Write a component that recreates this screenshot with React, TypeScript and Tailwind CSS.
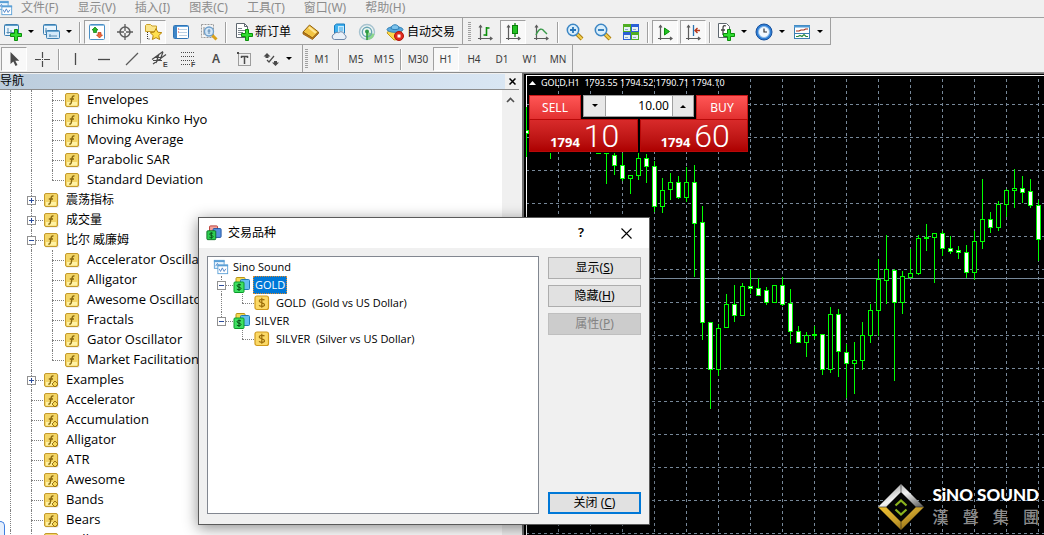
import { useState } from 'react'
import type { ReactNode } from 'react'
import clsx from 'clsx'

// x, high, low, body top, body bottom, filled
type Candle = [number, number, number, number, number, boolean]

const candles: Candle[] = [
  [26, 34, 84, 57, 61, true],
  [50, 80, 86, 80, 80, false],
  [98, 80, 81, 80, 81, false],
  [106, 80, 111, 80, 81, false],
  [114, 80, 102, 82, 93, true],
  [122, 80, 108, 92, 106, true],
  [130, 102, 121, 102, 106, false],
  [138, 80, 107, 85, 103, false],
  [146, 81, 110, 85, 94, true],
  [154, 88, 139, 93, 134, true],
  [162, 105, 140, 117, 134, false],
  [170, 100, 127, 109, 117, false],
  [178, 103, 126, 109, 125, true],
  [186, 94, 129, 109, 125, false],
  [194, 92, 204, 109, 151, true],
  [202, 133, 267, 149, 250, true],
  [210, 249, 336, 249, 297, true],
  [218, 251, 303, 255, 297, false],
  [226, 221, 255, 231, 255, false],
  [234, 212, 249, 231, 243, true],
  [242, 210, 243, 213, 243, false],
  [250, 197, 221, 213, 216, true],
  [258, 205, 223, 215, 223, true],
  [266, 214, 232, 217, 230, true],
  [274, 212, 230, 212, 230, false],
  [282, 204, 233, 212, 232, true],
  [290, 216, 271, 230, 259, true],
  [298, 253, 270, 258, 270, true],
  [306, 259, 284, 262, 270, false],
  [314, 253, 266, 261, 263, false],
  [322, 261, 302, 261, 297, true],
  [330, 234, 300, 241, 297, false],
  [338, 236, 304, 241, 279, true],
  [346, 271, 325, 279, 291, true],
  [354, 269, 321, 287, 291, false],
  [362, 249, 297, 262, 288, false],
  [370, 231, 270, 237, 263, false],
  [378, 186, 263, 206, 238, false],
  [386, 162, 231, 196, 208, false],
  [394, 196, 308, 197, 230, true],
  [402, 198, 241, 203, 230, false],
  [410, 176, 205, 200, 205, false],
  [418, 162, 202, 165, 201, false],
  [426, 151, 178, 164, 166, false],
  [434, 160, 210, 160, 165, false],
  [442, 158, 183, 160, 176, true],
  [450, 163, 181, 175, 179, true],
  [458, 173, 186, 177, 180, true],
  [466, 172, 205, 179, 200, true],
  [474, 158, 207, 168, 200, false],
  [482, 106, 176, 146, 169, false],
  [490, 139, 160, 146, 155, true],
  [498, 128, 158, 131, 155, false],
  [506, 116, 144, 117, 132, false],
  [514, 96, 135, 115, 118, false],
  [522, 103, 130, 115, 120, true],
  [530, 106, 135, 118, 133, true],
  [538, 127, 188, 132, 167, true],
]

const verticals = Array.from({ length: 60 }, (_, i) => 58 + i * 32)
const horizontals = Array.from({ length: 40 }, (_, i) => 31 + i * 33)

function PriceChart() {
  return (
    <svg className="block h-full w-full">
      <g transform="translate(-26 -2)">
        <g stroke="#778899" strokeDasharray="3 3" strokeWidth="1">
          {verticals.map((x) => (
            <line key={x} x1={x + 0.5} x2={x + 0.5} y1="0" y2="1400" />
          ))}
          {horizontals.map((y) => (
            <line key={y} x1="26" x2="2000" y1={y + 0.5} y2={y + 0.5} />
          ))}
        </g>
        <rect x="26" y="205" width="2000" height="1" fill="#778899" />
        <rect x="26" y="2" width="2000" height="1" fill="#fff" />
        <rect x="26" y="2" width="1" height="1400" fill="#fff" />
        {candles.map(([x, high, low, top, bottom, filled]) => (
          <g key={x}>
            <rect x={x} y={high} width="1" height={low - high} fill="#00ff00" />
            {bottom - top > 2 ? (
              <rect
                x={x - 1.5}
                y={top + 0.5}
                width="4"
                height={bottom - top - 1}
                fill={filled ? '#fff' : '#000'}
                stroke="#00ff00"
              />
            ) : (
              bottom > top && <rect x={x - 2} y={top} width="5" height={bottom - top} fill="#00ff00" />
            )}
          </g>
        ))}
      </g>
    </svg>
  )
}

/* ---------- icons ---------- */

function Icon({ children, size = 18 }: { children: ReactNode; size?: number }) {
  return (
    <svg width={size} height={size} viewBox="0 0 18 18" fill="none" className="shrink-0">
      {children}
    </svg>
  )
}

const Plus = () => (
  <path
    d="M10.5 6.5h3v4h4v3h-4v4h-3v-4h-4v-3h4z"
    fill="#2fdc2f"
    stroke="#0a8f0a"
    strokeWidth="1"
  />
)

const NewChartIcon = () => (
  <Icon>
    <rect x="0.5" y="1.5" width="14" height="11" rx="1" fill="#eaf5fd" stroke="#3c7fb1" />
    <path d="M1 2.500h13" stroke="#5b9bc8" strokeWidth="1" />
    <path d="M4 5v6M2.5 9.500h8M7 7v3" stroke="#5b8fb5" />
    <Plus />
  </Icon>
)

const ProfilesIcon = () => (
  <Icon>
    <rect x="1.500" y="1.500" width="13" height="10" rx="1" fill="#eaf5fd" stroke="#3c7fb1" />
    <path d="M2 2.500h12" stroke="#6aa7d2" />
    <path d="M4 5v5M3 8h6" stroke="#5b8fb5" />
    <rect x="4.500" y="7.500" width="13" height="8" rx="1" fill="#d3e9f9" stroke="#3c7fb1" />
    <path d="M5 8.500h12" stroke="#6aa7d2" />
    <path d="M7 13h8M8 11v3" stroke="#5b8fb5" />
  </Icon>
)

const MarketWatchIcon = () => (
  <Icon>
    <rect x="1.500" y="1.500" width="15" height="15" rx="1" fill="#fff" stroke="#4b8fc4" />
    <path d="M2 2.500h14" stroke="#8fc0e6" />
    <path d="M7 4l3 3H8.500v2.500h-3V7H4z" fill="#25b525" stroke="#0a7d0a" strokeWidth=".7" />
    <path d="M11.500 15l3-3H13V9.500h-3V12H8.500z" fill="#f0683c" stroke="#c23a10" strokeWidth=".7" />
  </Icon>
)

const CrosshairIcon = () => (
  <Icon>
    <circle cx="9" cy="9" r="5" stroke="#5c5c5c" strokeWidth="1.500" />
    <path d="M9 1v7M9 10v7M1 9h7M10 9h7" stroke="#5c5c5c" strokeWidth="1.300" />
  </Icon>
)

const NavigatorIcon = () => (
  <Icon>
    <path d="M1.500 8.500v-6l1-1h4l1.500 1.500h4.500v5.500z" fill="#fbe58a" stroke="#c9a02a" />
    <path d="M3.500 9v7h3" stroke="#333" strokeDasharray="1 1" />
    <path
      d="M12 5.500l1.800 3.700 4 .5-3 2.800.8 4L12 14.600l-3.600 1.900.8-4-3-2.800 4-.5z"
      fill="#ffe04d"
      stroke="#b8860b"
    />
  </Icon>
)

const TerminalIcon = () => (
  <Icon>
    <rect x="1.500" y="2.500" width="15" height="13" rx="1" fill="#fff" stroke="#2f74b5" />
    <path d="M2 3.500h14" stroke="#5aa0dc" />
    <rect x="2" y="3" width="3" height="12" fill="#3f86c8" />
    <path d="M7 6.500h8M7 9.500h8M7 12.500h8" stroke="#b9cfe3" />
    <path d="M6.500 5.500v1M6.500 8.500v1" stroke="#e23b2e" />
  </Icon>
)

const TesterIcon = () => (
  <Icon>
    <rect x="1.500" y="1.500" width="12" height="13" fill="#f4f4f4" stroke="#9a9a9a" strokeDasharray="2 1" />
    <path d="M4 4v8M4 10h7M10 4v3" stroke="#8a8a8a" />
    <path d="M12 12l4.500 4.500" stroke="#d9a21b" strokeWidth="3" />
    <circle cx="9" cy="8.500" r="4.500" fill="#cfe6f8" fillOpacity=".9" stroke="#6f9fca" strokeWidth="1.300" />
    <path d="M9 6v5M7.500 8h3" stroke="#5d8ab4" />
  </Icon>
)

const NewOrderIcon = () => (
  <Icon>
    <path d="M1.500.5h8l3 3v11h-11z" fill="#fff" stroke="#5f6870" />
    <path d="M9.500.5v3h3" stroke="#5f6870" />
    <path d="M3 5.500h4M3 7.500h7M3 9.500h5M3 11.500h4" stroke="#7b858d" />
    <Plus />
  </Icon>
)

const BookIcon = () => (
  <Icon>
    <path d="M7.500 2L16.500 9l-6 6L1 9z" fill="#f2c443" stroke="#8f5f10" />
    <path d="M7.500 3.500L14.500 9l-1.500 1.500L6 5z" fill="#ffe694" />
    <path d="M1 9v2l9.500 5.500 6-6V9l-6 6z" fill="#c47a16" stroke="#8f5f10" strokeWidth=".8" />
  </Icon>
)

const HostingIcon = () => (
  <Icon>
    <path d="M4.500 2.500l2-1.500h8v9h-10z" fill="#3fb1ef" stroke="#187cc0" />
    <rect x="8" y="3" width="6" height="8" fill="#c6eafd" />
    <path d="M9 5h4M9 7h4" stroke="#3ba7e4" />
    <path
      d="M4.500 16.500a2.700 2.700 0 01-.3-5.300 3 3 0 014.300-1.500 3.600 3.600 0 016 2 2.500 2.500 0 01-.5 4.800z"
      fill="#e9f0f8"
      stroke="#6f87a8"
    />
  </Icon>
)

const SignalsIcon = () => (
  <Icon>
    <circle cx="9" cy="9" r="7.500" stroke="#a7c3cf" strokeWidth="1.400" fill="#eef5f4" />
    <path d="M9 9v8a8 8 0 007.500-6z" fill="#8bd68b" />
    <circle cx="9" cy="9" r="4.700" stroke="#6aa6b4" strokeWidth="1.400" />
    <circle cx="9" cy="8.500" r="2" fill="#2f9c4a" />
    <path d="M9 9v8" stroke="#2d9c3c" strokeWidth="1.600" />
  </Icon>
)

const AutoTradingIcon = () => (
  <Icon>
    <path d="M3 7h13l-4 9.500-4 .5-7-7z" fill="#fbd84d" stroke="#c49a1c" />
    <ellipse cx="9" cy="6.500" rx="8" ry="2.800" fill="#5aa9dc" stroke="#2f7fb6" />
    <path d="M5 5.500C5 .5 13 .5 13 5.500c-2 1.500-6 1.500-8 0z" fill="#7cc3ec" stroke="#2f7fb6" />
    <circle cx="13" cy="13" r="4.500" fill="#e02a1d" stroke="#b01208" />
    <rect x="11.500" y="11.500" width="3" height="3" fill="#fff" />
  </Icon>
)

const Axes = () => (
  <path d="M4.500 3v14M2 15.500h13.500M3 4.500L4.500 2.500 6 4.500M14 14l2 1.500-2 1.500" stroke="#5c5c5c" strokeWidth="1.200" />
)

const BarChartIcon = () => (
  <Icon>
    <Axes />
    <path d="M10.500 4v9M10.500 5h3M7.500 12h3" stroke="#0a8f0a" strokeWidth="1.600" />
  </Icon>
)

const CandleChartIcon = () => (
  <Icon>
    <Axes />
    <path d="M11 0v14" stroke="#0a7d0a" strokeWidth="1.300" />
    <rect x="8.500" y="2.500" width="5" height="8" fill="#22c322" stroke="#0a7d0a" />
  </Icon>
)

const LineChartIcon = () => (
  <Icon>
    <Axes />
    <path d="M4 12c3-7 6-7 8-4l3 3" stroke="#3a9a4a" strokeWidth="1.400" />
  </Icon>
)

function ZoomIcon({ minus = false }: { minus?: boolean }) {
  return (
    <Icon>
      <path d="M11 11l5 5" stroke="#a97c0f" strokeWidth="4" />
      <path d="M11 11l5 5" stroke="#f2ce4e" strokeWidth="2.200" />
      <circle cx="7" cy="7" r="5.700" fill="#d9eefb" stroke="#3c86c4" strokeWidth="1.500" />
      <path d={minus ? 'M4 7h6' : 'M4 7h6M7 4v6'} stroke="#2775b8" strokeWidth="1.800" />
    </Icon>
  )
}

const TileIcon = () => (
  <Icon>
    <rect x="1" y="1" width="8" height="8" fill="#4fae22" />
    <rect x="9" y="1" width="8" height="8" fill="#2a5fd6" />
    <rect x="1" y="9" width="8" height="8" fill="#2a5fd6" />
    <rect x="9" y="9" width="8" height="8" fill="#4fae22" />
    <path d="M2 4h6v4H2zM2 12h6v4H2zM10 4h6v4h-6zM10 12h6v4h-6z" fill="#e6f2f4" />
    <path d="M3 6.500h3M11 6.500h3M3 14.500h3M11 14.500h3" stroke="#8fa9c9" />
  </Icon>
)

const AutoScrollIcon = () => (
  <Icon>
    <Axes />
    <path d="M8.500 5l5 3.500-5 3.500z" fill="#22c322" stroke="#0a8f0a" />
  </Icon>
)

const ChartShiftIcon = () => (
  <Icon>
    <Axes />
    <path d="M9.500 2v11" stroke="#2b72b0" strokeWidth="1.300" />
    <path d="M16 7.500h-5M13.500 5L11 7.500l2.500 2.500" stroke="#b8391b" strokeWidth="1.400" />
  </Icon>
)

const IndicatorsIcon = () => (
  <Icon>
    <path d="M1.500.5h8l3 3v11h-11z" fill="#fff" stroke="#5f6870" />
    <path d="M9 3c-2-1-3 0-3 2v7M4 7h4" stroke="#444" strokeWidth="1.300" />
    <Plus />
  </Icon>
)

const ClockIcon = () => (
  <Icon>
    <circle cx="9" cy="9" r="8" fill="#2f7fd6" stroke="#17509c" />
    <circle cx="9" cy="9" r="5.500" fill="#f3f9ff" stroke="#8fbdea" />
    <path d="M9 5.500V9h3" stroke="#333" strokeWidth="1.200" />
  </Icon>
)

const TemplateIcon = () => (
  <Icon>
    <rect x="1.500" y="2.500" width="15" height="13" fill="#fff" stroke="#3c7fb1" />
    <path d="M1 3.500h16" stroke="#4f9bd6" strokeWidth="2" />
    <path d="M1 10.500h16" stroke="#3c7fb1" />
    <path d="M3 8h3l2-1h3l1.500-1H15" stroke="#a12f1a" strokeWidth="1.200" />
    <path d="M3 13.500h2l2-1 2 1 2-2 2 2h2" stroke="#2a8a3a" strokeWidth="1.200" />
  </Icon>
)

const CursorIcon = () => (
  <Icon>
    <path d="M5.500 2v12l2.800-2.600L10.500 16l2-1-2.200-4.300h4z" fill="#4a4a4a" />
  </Icon>
)

const CrossIcon = () => (
  <Icon>
    <path d="M9.500 2v6M9.500 11v6M2 9.500h6M11 9.500h6M9 9.500h1" stroke="#4a4a4a" strokeWidth="1.200" />
  </Icon>
)

const VLineIcon = () => (
  <Icon>
    <path d="M8.500 3v12" stroke="#4a4a4a" strokeWidth="1.300" />
  </Icon>
)

const HLineIcon = () => (
  <Icon>
    <path d="M3 9.500h12" stroke="#4a4a4a" strokeWidth="1.300" />
  </Icon>
)

const TrendIcon = () => (
  <Icon>
    <path d="M3 15L15 3" stroke="#5a5a5a" strokeWidth="1.300" />
  </Icon>
)

const ChannelIcon = () => (
  <Icon>
    <path d="M1 9.500L12 1.500M2 14L15 4.500M3 7.500h8M2 10.500h9M5 13l3-9M9 10l3-8" stroke="#4a4a4a" strokeWidth="1.200" />
    <text x="12" y="17" fontSize="7" fontWeight="bold" fontFamily="Liberation Sans" fill="#444">E</text>
  </Icon>
)

const FiboIcon = () => (
  <Icon>
    <path d="M2 2.500h14M2 6.500h14M2 10.500h14M2 14.500h9" stroke="#4a4a4a" strokeDasharray="1 1" />
    <text x="12" y="17" fontSize="7" fontWeight="bold" fontFamily="Liberation Sans" fill="#444">F</text>
  </Icon>
)

const TextLabelIcon = () => (
  <Icon>
    <rect x="3.500" y="3.500" width="12" height="12" stroke="#4a4a4a" strokeDasharray="1 1" />
    <rect x="2" y="2" width="2" height="2" fill="#4a4a4a" />
    <path d="M6 6.500h7M9.500 6v8M6.500 6v2M12.500 6v2" stroke="#4a4a4a" strokeWidth="1.500" />
  </Icon>
)

const ArrowsIcon = () => (
  <Icon>
    <path d="M5 3l3.500 3.500H6.500V8h-3V6.500h-2zM13.500 16L17 12.500h-2V11h-3v1.500h-2z" fill="#4a4a4a" />
    <path d="M5 10l2 2 5-6" stroke="#4a4a4a" strokeWidth="1.200" />
  </Icon>
)

const ChartWindowsIcon = () => (
  <Icon size={16}>
    <rect x="1.500" y="1.500" width="11" height="9" fill="#e8f4fd" stroke="#5a9fd6" />
    <path d="M1 2.500h12" stroke="#5a9fd6" strokeWidth="2" />
    <path d="M3 8l2-3 2 3" stroke="#4c7fc4" />
    <rect x="5.500" y="6.500" width="11" height="10" fill="#fff" stroke="#5a9fd6" />
    <path d="M5 7.500h12" stroke="#5a9fd6" strokeWidth="1.500" />
    <path d="M7 11l1.500 3 2-4 2 4 2-3" stroke="#4c7fc4" />
  </Icon>
)

function FunctionIcon({ custom = false }: { custom?: boolean }) {
  return (
    <svg width="16" height="16" viewBox="0 0 16 16" fill="none" className="shrink-0">
      <rect x="2" y="2" width="13.500" height="13.500" rx="1.500" fill="#000" fillOpacity=".12" />
      <rect x="1.500" y="1.500" width="13" height="13" rx="1.500" fill="#f3d566" stroke="#c49a2c" />
      <path d="M3 10h10v3.500H3z" fill="#fff2a4" />
      <path d="M10.500 4.200C9 3.500 8.400 4.600 8.100 6L7.300 10.500C7 12 6.300 12.200 5.300 11.800M5.800 7h4.200" stroke="#8a6a10" strokeWidth="1.400" />
      {custom && <path d="M12 9l3 3-3 3-3-3z" fill="#f5d95c" stroke="#9b7414" />}
    </svg>
  )
}

const SymbolGroupIcon = () => (
  <svg width="18" height="16" viewBox="0 0 18 16" fill="none" className="shrink-0">
    <rect x="3" y=".5" width="9" height="8" rx="1" fill="#f3da55" stroke="#b99418" />
    <rect x="7.500" y="2.500" width="9" height="10" rx="1" fill="#64bdf0" stroke="#1f7ab8" />
    <rect x="1" y="5" width="10" height="10.500" rx="1" fill="#3fe062" stroke="#0a9a28" />
    <path d="M8 8c-1-.8-4-.7-4 .8 0 1.600 4 1 4 2.700 0 1.500-3 1.500-4.200.7M6 6.500v7.500" stroke="#064d16" />
  </svg>
)

const DialogIcon = () => (
  <svg width="16" height="16" viewBox="0 0 18 18" fill="none" className="shrink-0">
    <rect x="4" y="1" width="9" height="8" rx="1" fill="#f3a39b" stroke="#b3302a" />
    <rect x="8" y="4" width="9" height="10" rx="1" fill="#5790dc" stroke="#1c4f9e" />
    <rect x="1" y="6.500" width="10" height="10" rx="1" fill="#2fd052" stroke="#0a6a20" />
    <path d="M8 9.500c-1-.8-4-.7-4 .8 0 1.600 4 1 4 2.700 0 1.500-3 1.500-4.200.7M6 8v7.500" stroke="#064d16" />
  </svg>
)

const SymbolIcon = () => (
  <svg width="16" height="16" viewBox="0 0 16 16" fill="none" className="shrink-0">
    <rect x="1" y="1" width="13.500" height="13.500" rx="2" fill="#fbd966" stroke="#d09a1c" strokeWidth="1.200" />
    <path d="M10.500 5.200C9.500 4 5.200 4 5.200 6c0 2.200 5.300 1.300 5.300 3.700 0 2.100-4.300 2-5.500.7M7.800 2.800v10" stroke="#9b6d0a" strokeWidth="1.200" />
  </svg>
)

const Caret = () => <svg width="6" height="4" viewBox="0 0 6 4"><path d="M0 0h6L3 3z" fill="#000" /></svg>

/* ---------- toolbars ---------- */

function ToolButton({
  label,
  pressed = false,
  children,
}: {
  label: string
  pressed?: boolean
  children: ReactNode
}) {
  return (
    <button
      type="button"
      aria-label={label}
      aria-pressed={pressed}
      className={clsx(
        'mx-px flex h-6 w-[26px] items-center justify-center',
        pressed && 'border border-t-[#a0a0a0] border-l-[#a0a0a0] border-r-white border-b-white bg-[#f8f8f8]'
      )}
    >
      {children}
    </button>
  )
}

function SplitButton({ label, children }: { label: string; children: ReactNode }) {
  return (
    <div className="flex h-6 items-center pr-[2px]">
      <button type="button" aria-label={label} className="flex w-[26px] justify-center">
        {children}
      </button>
      <button type="button" aria-label={label + ' ▾'} className="flex w-[10px] justify-center">
        <Caret />
      </button>
    </div>
  )
}

const Separator = () => <div className="mx-[2px] h-[21px] w-[2px] border-r border-l border-l-[#a0a0a0] border-r-white" />

const Grip = () => (
  <div className="h-5 w-[3px] bg-[repeating-linear-gradient(to_bottom,#a0a0a0_0_1px,#f0f0f0_1px_2px)]" />
)

const menus = ['文件(F)', '显示(V)', '插入(I)', '图表(C)', '工具(T)', '窗口(W)', '帮助(H)']

function Timeframe({ name, active, onPick }: { name: string; active: boolean; onPick: (n: string) => void }) {
  return (
    <button
      type="button"
      onClick={() => onPick(name)}
      className={clsx(
        'mx-px h-6 w-[26px] text-[10px] text-[#3c3c3c]',
        active && 'border border-t-[#a0a0a0] border-l-[#a0a0a0] border-r-white border-b-white bg-[#f8f8f8]'
      )}
    >
      {name}
    </button>
  )
}

function Toolbars() {
  const [timeframe, setTimeframe] = useState('H1')
  const frame = (name: string) => (
    <Timeframe key={name} name={name} active={timeframe === name} onPick={setTimeframe} />
  )

  return (
    <header className="shrink-0 bg-[#f0f0f0]">
      <nav className="flex h-[17px] items-center gap-[19px] pb-px text-xs text-[#8c8c8c]">
        <span className="-mr-[11px] -ml-[3px]"><ChartWindowsIcon /></span>
        {menus.map((m) => (
          <button key={m} type="button" className="leading-4 whitespace-nowrap">{m}</button>
        ))}
      </nav>

      <div className="flex border-t border-[#a0a0a0]">
        <div className="flex h-[27px] items-center border-r border-b border-[#a0a0a0] pt-[2px] pr-[2px]">
          <SplitButton label="新图表"><NewChartIcon /></SplitButton>
          <SplitButton label="配置文件"><ProfilesIcon /></SplitButton>
          <span className="pl-px"><Separator /></span>
          <ToolButton label="市场报价" pressed><MarketWatchIcon /></ToolButton>
          <ToolButton label="数据窗口"><CrosshairIcon /></ToolButton>
          <ToolButton label="导航" pressed><NavigatorIcon /></ToolButton>
          <ToolButton label="终端"><TerminalIcon /></ToolButton>
          <ToolButton label="策略测试"><TesterIcon /></ToolButton>
          <Separator />
          <button type="button" className="flex w-[68px] items-center gap-[2px] pl-[6px] text-xs whitespace-nowrap">
            <NewOrderIcon />新订单
          </button>
          <ToolButton label="MetaEditor"><BookIcon /></ToolButton>
          <ToolButton label="虚拟主机"><HostingIcon /></ToolButton>
          <ToolButton label="信号"><SignalsIcon /></ToolButton>
          <button type="button" className="flex w-[79px] items-center gap-[3px] pl-[5px] text-xs whitespace-nowrap">
            <AutoTradingIcon />自动交易
          </button>
        </div>
        <div className="flex h-[27px] items-center border-r border-b border-[#a0a0a0] pt-[2px] pr-[3px] pl-[5px]">
          <Grip />
          <ToolButton label="柱状图"><BarChartIcon /></ToolButton>
          <ToolButton label="阴阳烛" pressed><CandleChartIcon /></ToolButton>
          <ToolButton label="折线图"><LineChartIcon /></ToolButton>
          <Separator />
          <ToolButton label="放大"><ZoomIcon /></ToolButton>
          <ToolButton label="缩小"><ZoomIcon minus /></ToolButton>
          <ToolButton label="平铺窗口"><TileIcon /></ToolButton>
          <Separator />
          <ToolButton label="自动滚动" pressed><AutoScrollIcon /></ToolButton>
          <ToolButton label="图表平移" pressed><ChartShiftIcon /></ToolButton>
          <Separator />
          <SplitButton label="指标"><IndicatorsIcon /></SplitButton>
          <SplitButton label="时间周期"><ClockIcon /></SplitButton>
          <SplitButton label="模板"><TemplateIcon /></SplitButton>
        </div>
      </div>

      <div className="flex">
        <div className="flex h-[27px] items-center border-r border-[#a0a0a0] pt-px pr-[6px]">
          <ToolButton label="光标" pressed><CursorIcon /></ToolButton>
          <ToolButton label="十字准线"><CrossIcon /></ToolButton>
          <Separator />
          <ToolButton label="垂直线"><VLineIcon /></ToolButton>
          <ToolButton label="水平线"><HLineIcon /></ToolButton>
          <ToolButton label="趋势线"><TrendIcon /></ToolButton>
          <ToolButton label="等距通道"><ChannelIcon /></ToolButton>
          <ToolButton label="斐波那契"><FiboIcon /></ToolButton>
          <ToolButton label="文本">
            <span className="text-xs font-semibold text-[#4a4a4a]">A</span>
          </ToolButton>
          <ToolButton label="文本标签"><TextLabelIcon /></ToolButton>
          <SplitButton label="箭头"><ArrowsIcon /></SplitButton>
        </div>
        <div className="flex h-[27px] items-center border-r border-[#a0a0a0] pt-px pl-[2px]">
          <Grip />
          {['M1'].map(frame)}
          <Separator />
          {['M5', 'M15'].map(frame)}
          <Separator />
          {['M30', 'H1', 'H4', 'D1', 'W1', 'MN'].map(frame)}
        </div>
      </div>
    </header>
  )
}

/* ---------- navigator ---------- */

interface Node {
  name: string
  level: 2 | 3
  box?: '+' | '-'
  custom?: boolean
  last?: boolean
}

const nodes: Node[] = [
  { name: 'Envelopes', level: 3 },
  { name: 'Ichimoku Kinko Hyo', level: 3 },
  { name: 'Moving Average', level: 3 },
  { name: 'Parabolic SAR', level: 3 },
  { name: 'Standard Deviation', level: 3, last: true },
  { name: '震荡指标', level: 2, box: '+' },
  { name: '成交量', level: 2, box: '+' },
  { name: '比尔 威廉姆', level: 2, box: '-' },
  { name: 'Accelerator Oscillator', level: 3 },
  { name: 'Alligator', level: 3 },
  { name: 'Awesome Oscillator', level: 3 },
  { name: 'Fractals', level: 3 },
  { name: 'Gator Oscillator', level: 3 },
  { name: 'Market Facilitation Index', level: 3, last: true },
  { name: 'Examples', level: 2, box: '+', custom: true },
  { name: 'Accelerator', level: 2, custom: true },
  { name: 'Accumulation', level: 2, custom: true },
  { name: 'Alligator', level: 2, custom: true },
  { name: 'ATR', level: 2, custom: true },
  { name: 'Awesome', level: 2, custom: true },
  { name: 'Bands', level: 2, custom: true },
  { name: 'Bears', level: 2, custom: true },
  { name: 'Bulls', level: 2, custom: true },
]

function Expander({ sign }: { sign: '+' | '-' }) {
  return (
    <svg width="9" height="9" viewBox="0 0 9 9" className="block shrink-0" shapeRendering="crispEdges">
      <rect x="0" y="0" width="9" height="9" fill="#919191" />
      <rect x="1" y="1" width="7" height="7" fill="#fff" />
      <rect x="2" y="4" width="5" height="1" fill="#2b4b9b" />
      {sign === '+' && <rect x="4" y="2" width="1" height="5" fill="#2b4b9b" />}
    </svg>
  )
}

// One indent column of a tree row: the trunk line plus the stub to the icon.
function Branch({ stub = false, last = false, box }: { stub?: boolean; last?: boolean; box?: '+' | '-' }) {
  return (
    <span className="grid h-full w-[21px] shrink-0 grid-cols-[9px_12px] items-center">
      <span className="col-start-2 row-start-1 h-full">
        <span className={clsx('block border-l border-dotted border-[#808080]', last ? 'h-1/2' : 'h-full')} />
      </span>
      {stub && <span className="col-start-2 row-start-1 border-t border-dotted border-[#808080]" />}
      {box && (
        <span className="col-span-2 col-start-1 row-start-1 pl-[5px]"><Expander sign={box} /></span>
      )}
    </span>
  )
}

function Navigator() {
  return (
    <aside className="flex w-[519px] shrink-0 flex-col bg-[#f0f0f0] pt-px">
      <div className="flex h-4 items-center border-b border-[#8c8c8c] text-xs">
        <h2 className="h-full flex-1 bg-linear-to-r from-[#bccddd] to-[#d9e6f3] text-xs leading-[14px]">导航</h2>
        <button type="button" aria-label="关闭" className="flex w-[14px] justify-center">
          <svg width="7" height="7" viewBox="0 0 7 7"><path d="M.5.5l6 6M6.500.5l-6 6" stroke="#000" strokeWidth="1.500" /></svg>
        </button>
      </div>
      <div className="flex min-h-0 flex-1">
        <ul className="min-w-0 flex-1 overflow-hidden bg-white font-['Open_Sans','Noto_Sans_CJK_SC',sans-serif] text-[13px] text-black">
          {nodes.map((n, i) => (
            <li key={i} className="flex h-5 items-center pl-px whitespace-nowrap">
              <Branch />
              <Branch stub={n.level === 2} box={n.box} />
              {n.level === 3 && <Branch stub last={n.last} />}
              <FunctionIcon custom={n.custom} />
              <span className={clsx('pl-[7px]', n.name > '\u3000' && 'text-xs')}>{n.name}</span>
            </li>
          ))}
        </ul>
        <div className="flex w-[17px] justify-center pt-[7px]">
          <svg width="9" height="6" viewBox="0 0 9 6"><path d="M1 5l3.500-3.500L8 5" fill="none" stroke="#505050" strokeWidth="1.600" /></svg>
        </div>
      </div>
    </aside>
  )
}

/* ---------- one click trading ---------- */

function TradePanel() {
  return (
    <div className="absolute top-[20px] left-[3px] w-[219px] bg-black text-white">
      <div className="flex h-6 justify-between">
        <button type="button" className="w-[52px] border border-b-0 border-[#c81818] bg-linear-to-b from-[#ff5555] to-[#e23030] text-xs leading-5">
          SELL
        </button>
        <div className="mb-[2px] flex w-[111px] border border-[#a0a0a0] bg-[#e8e8e8]">
          <button type="button" aria-label="减少" className="flex w-[21px] items-center justify-center"><Caret /></button>
          <input
            aria-label="手数"
            defaultValue="10.00"
            className="min-w-0 flex-1 border-x border-[#a0a0a0] bg-white px-[3px] text-right text-xs text-black outline-none"
          />
          <button type="button" aria-label="增加" className="flex w-[20px] rotate-180 items-center justify-center"><Caret /></button>
        </div>
        <button type="button" className="w-[52px] border border-b-0 border-[#c81818] bg-linear-to-b from-[#ff5555] to-[#e23030] text-xs leading-5">
          BUY
        </button>
      </div>
      <div className="flex h-[33px] gap-[2px]">
        {['10', '60'].map((pips) => (
          <div
            key={pips}
            className="flex flex-1 items-baseline justify-center gap-1 border border-[#b80808] bg-linear-to-b from-[#d82a2a] to-[#ad0000] pl-[3px] leading-8"
          >
            <span className="font-['Open_Sans',sans-serif] text-[13px] font-bold">1794</span>
            <span className="font-['Roboto',sans-serif] text-[32px] font-light">{pips}</span>
          </div>
        ))}
      </div>
    </div>
  )
}

function SinoLogo() {
  return (
    <div className="absolute right-[5px] bottom-[5px] flex items-center gap-2">
      <svg width="46" height="46" viewBox="0 0 46 46">
        <defs>
          <linearGradient id="silver" x1="0" y1="0" x2="1" y2="1">
            <stop offset="0" stopColor="#777" />
            <stop offset=".5" stopColor="#f4f4f4" />
            <stop offset="1" stopColor="#555" />
          </linearGradient>
          <linearGradient id="gold" x1="0" y1="0" x2="1" y2="1">
            <stop offset="0" stopColor="#f0c030" />
            <stop offset=".5" stopColor="#c9a02c" />
            <stop offset="1" stopColor="#7a5208" />
          </linearGradient>
        </defs>
        <path d="M23 0l23 23H0z" fill="url(#silver)" />
        <path d="M0 23h46L23 46z" fill="url(#gold)" />
        <path d="M23 8l15 15-15 15L8 23z" fill="#050505" />
        <path d="M23 0v8M0 23h8M23 46v-8M46 23h-8" stroke="#222" strokeWidth=".6" />
        <path d="M17.500 21.500l5.500-5 5.500 5M17.500 25.500l5.500 5 5.500-5" fill="none" stroke="#8cb41e" strokeWidth="2.200" />
      </svg>
      <div>
        <div className="font-['Lato','Open_Sans',sans-serif] text-[17px] leading-5 font-black whitespace-nowrap text-white">
          SiNO SOUND
        </div>
        <div className="flex justify-between text-[16px] leading-6 font-medium text-[#8c8c8c]">
          {['漢', '聲', '集', '團'].map((c) => <span key={c}>{c}</span>)}
        </div>
      </div>
    </div>
  )
}

function ChartPane() {
  return (
    <main className="relative min-w-0 flex-1 overflow-hidden border-t border-l-2 border-[#6e6e6e] bg-black pt-px pl-[2px]">
      <div className="relative h-full">
        <PriceChart />
        <p className="absolute top-[1px] left-[3px] flex items-center gap-[5px] text-[9px] leading-[14px] whitespace-pre text-white">
          <svg width="7" height="4" viewBox="0 0 7 4"><path d="M0 4h7L3.500 0z" fill="#fff" /></svg>
          {'GOLD,H1  1793.55 1794.52 1790.71 1794.10'}
        </p>
        <TradePanel />
      </div>
      <SinoLogo />
    </main>
  )
}

/* ---------- symbols dialog ---------- */

function SymbolTree() {
  const groups = [
    { name: 'GOLD', child: 'GOLD  (Gold vs US Dollar)' },
    { name: 'SILVER', child: 'SILVER  (Silver vs US Dollar)' },
  ]
  const [selected, setSelected] = useState('GOLD')

  return (
    <ul className="flex-1 border border-[#828790] bg-white pt-px pl-1 font-['Open_Sans',sans-serif] text-[11px] leading-[18px] whitespace-pre text-black">
      <li className="flex h-[18px] items-center gap-1 pl-px">
        <ChartWindowsIcon />Sino Sound
      </li>
      {groups.map((g, i) => (
        <li key={g.name}>
          <div className="flex h-[18px] items-center">
            <Branch stub last={i === 1} box="-" />
            <SymbolGroupIcon />
            <button
              type="button"
              onClick={() => setSelected(g.name)}
              className={clsx(
                'ml-[2px] h-[18px] border border-dotted px-px leading-[16px]',
                selected === g.name ? 'border-[#e08a28] bg-[#0078d7] text-white' : 'border-transparent'
              )}
            >
              {g.name}
            </button>
          </div>
          <div className="flex h-[18px] items-center">
            {i === 0 ? <Branch /> : <span className="w-[21px]" />}
            <Branch stub last />
            <SymbolIcon />
            <span className="pl-[6px]">{g.child}</span>
          </div>
        </li>
      ))}
    </ul>
  )
}

function SymbolsDialog() {
  const actions = [
    { text: '显示', hotkey: 'S' },
    { text: '隐藏', hotkey: 'H' },
    { text: '属性', hotkey: 'P', disabled: true },
  ]

  return (
    <section
      role="dialog"
      aria-label="交易品种"
      className="absolute top-[217px] left-[198px] flex h-[308px] w-[452px] flex-col border border-[#5a5a5a] bg-[#f0f0f0] shadow-[0_3px_14px_rgba(0,0,0,0.45)]"
    >
      <div className="flex h-[30px] items-center bg-white pl-[7px]">
        <DialogIcon />
        <h2 className="flex-1 pl-[6px] text-xs text-black">交易品种</h2>
        <button type="button" aria-label="帮助" className="w-[46px] text-[13px] font-semibold text-black">?</button>
        <button type="button" aria-label="关闭" className="flex w-[45px] justify-center">
          <svg width="11" height="11" viewBox="0 0 11 11"><path d="M.5.5l10 10M10.500.5l-10 10" stroke="#000" strokeWidth="1.100" /></svg>
        </button>
      </div>
      <div className="flex flex-1 gap-[9px] pt-[8px] pr-[8px] pb-[10px] pl-[8px]">
        <SymbolTree />
        <div className="flex w-[93px] flex-col gap-[6px] pt-px text-xs">
          {actions.map((a) => (
            <button
              key={a.text}
              type="button"
              disabled={a.disabled}
              className="h-[22px] border border-[#adadad] bg-[#e1e1e1] text-black disabled:border-[#bfbfbf] disabled:bg-[#cccccc] disabled:text-[#838383]"
            >
              {a.text}(<u>{a.hotkey}</u>)
            </button>
          ))}
          <button type="button" className="mt-auto h-[22px] border-2 border-[#0078d7] bg-[#e1e1e1] text-black">
            关闭 (<u>C</u>)
          </button>
        </div>
      </div>
    </section>
  )
}

export default function App() {
  return (
    <div className="relative flex h-screen flex-col overflow-hidden bg-[#f0f0f0] font-['Noto_Sans','Noto_Sans_CJK_SC',sans-serif]">
      <Toolbars />
      <div className="flex min-h-0 flex-1 border-t border-[#8c8c8c]">
        <Navigator />
        <div className="w-[3px] shrink-0 bg-[#f0f0f0]" />
        <ChartPane />
      </div>
      <div className="absolute bottom-0 left-0 h-[14px] w-[5px] rounded-tr-[5px] border-t border-r border-[#3f7fe0] bg-[#e6effc]" />
      <SymbolsDialog />
    </div>
  )
}
